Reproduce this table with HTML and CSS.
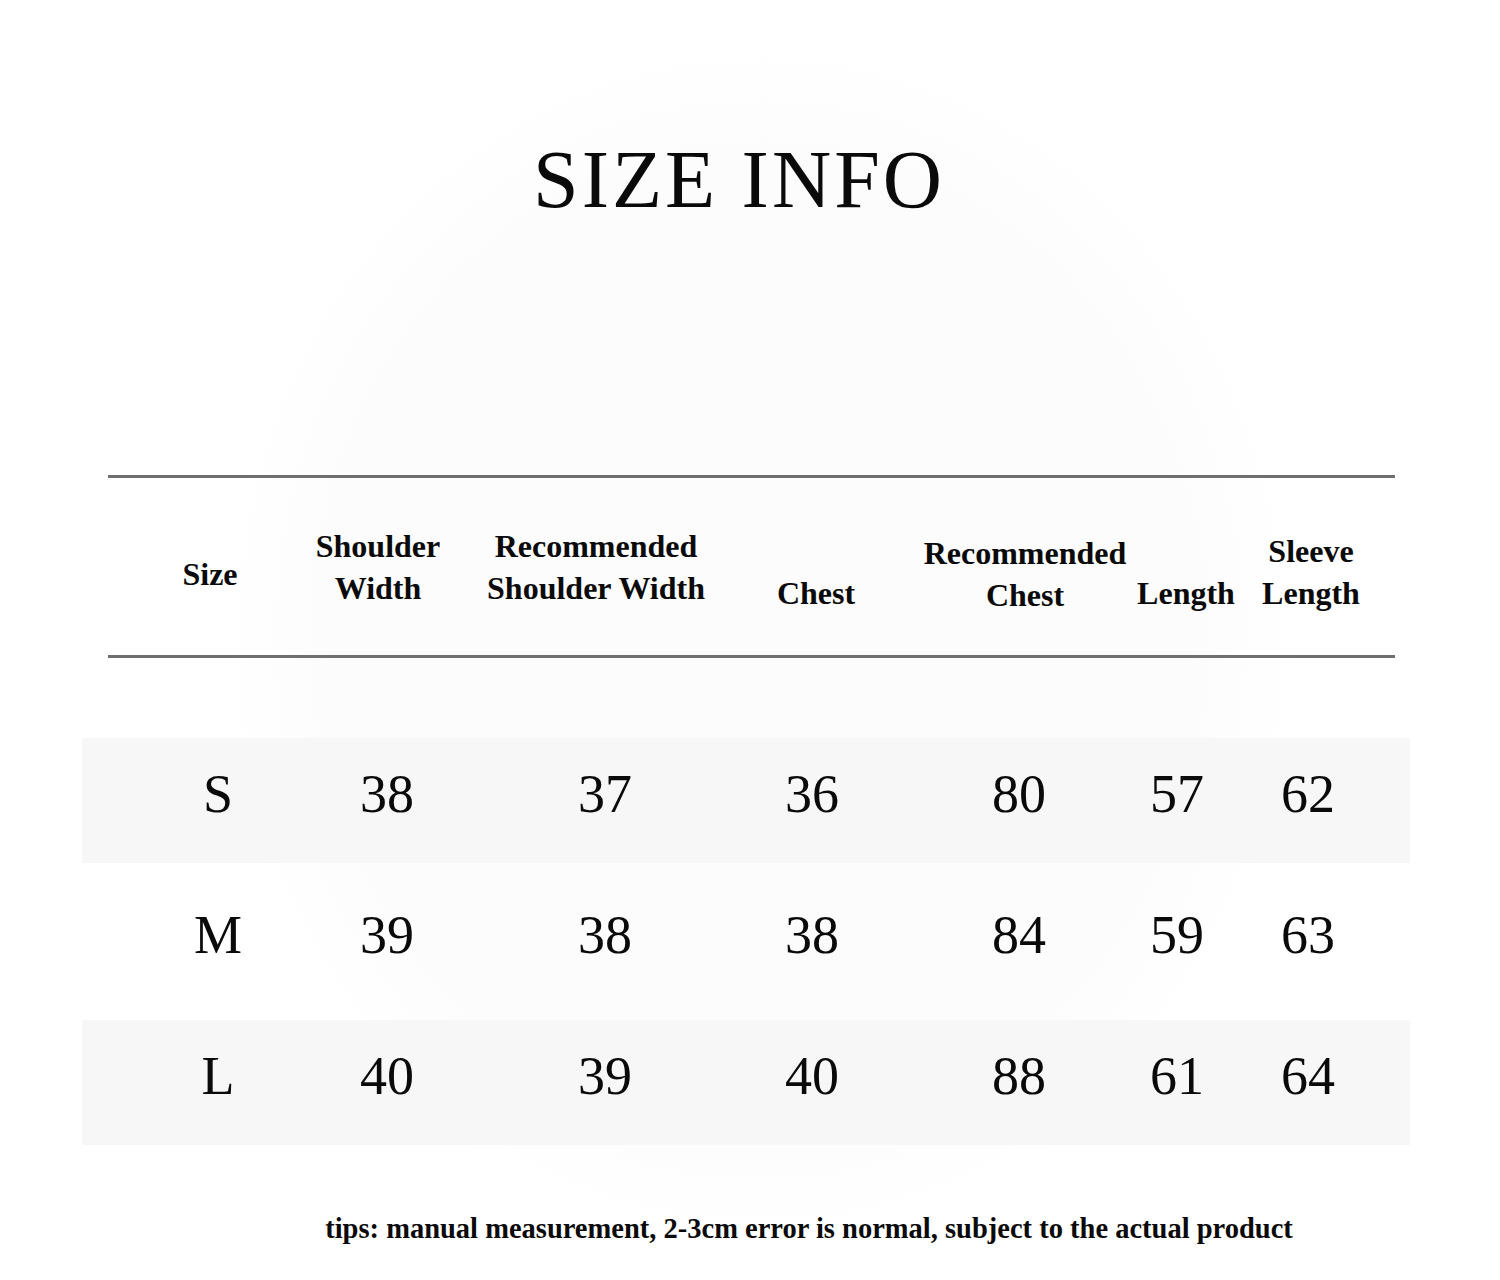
FILE: index.html
```html
<!DOCTYPE html>
<html lang="en">
<head>
<meta charset="utf-8">
<title>Size Info</title>
<link rel="stylesheet" href="styles.css">
</head>
<body>
<main class="page">
  <h1 class="title">SIZE INFO</h1>
  <section class="table">
    <div class="head">
      <div class="hcell h-size"><span>Size</span></div>
      <div class="hcell"><span>Shoulder</span><span>Width</span></div>
      <div class="hcell"><span>Recommended</span><span>Shoulder Width</span></div>
      <div class="hcell h-end"><span>Chest</span></div>
      <div class="hcell h-rchest"><span>Recommended</span><span>Chest</span></div>
      <div class="hcell h-end"><span>Length</span></div>
      <div class="hcell h-sleeve"><span>Sleeve</span><span>Length</span></div>
    </div>
    <div class="rows">
      <div class="row shaded">
        <div class="cell">S</div><div class="cell">38</div><div class="cell">37</div><div class="cell">36</div><div class="cell">80</div><div class="cell">57</div><div class="cell">62</div>
      </div>
      <div class="row">
        <div class="cell">M</div><div class="cell">39</div><div class="cell">38</div><div class="cell">38</div><div class="cell">84</div><div class="cell">59</div><div class="cell">63</div>
      </div>
      <div class="row shaded">
        <div class="cell">L</div><div class="cell">40</div><div class="cell">39</div><div class="cell">40</div><div class="cell">88</div><div class="cell">61</div><div class="cell">64</div>
      </div>
    </div>
  </section>
  <p class="tips">tips: manual measurement, 2-3cm error is normal, subject to the actual product</p>
</main>
</body>
</html>
```

FILE: styles.css
```css
html, body {
  margin: 0;
  padding: 0;
}
body {
  width: 1500px;
  height: 1280px;
  overflow: hidden;
  color: #0a0a0a;
  font-family: "Liberation Serif", "Times New Roman", serif;
  background:
    radial-gradient(ellipse 540px 600px at 760px 640px, #fcfcfc 0%, #fcfcfc 80%, #ffffff 100%);
}
.page {
  padding-top: 139px;
}
.title {
  margin: 0;
  font-size: 82px;
  line-height: 82px;
  font-weight: 400;
  letter-spacing: 3px;
  text-align: center;
  padding-right: 22px;
}
.table {
  margin: 254px 0 0 82px;
  width: 1328px;
}
.head {
  margin: 0 15px 0 26px;
  height: 177px;
  border-top: 3px solid #6f6f6f;
  border-bottom: 3px solid #6f6f6f;
  display: grid;
  grid-template-columns: 124px 212px 224px 216px 202px 120px 130px;
  padding-left: 40px;
  font-size: 32px;
  font-weight: 700;
  line-height: 42px;
}
.hcell {
  display: flex;
  flex-direction: column;
  align-items: center;
  justify-content: center;
  white-space: nowrap;
}
.h-size { padding-top: 14px; }
.h-end { justify-content: flex-end; padding-bottom: 41px; }
.h-rchest { padding-top: 14px; }
.h-sleeve { padding-top: 10px; }
.rows {
  margin-top: 80px;
  display: flex;
  flex-direction: column;
  gap: 16px;
}
.row {
  height: 125px;
  display: grid;
  grid-template-columns: 152px 186px 250px 164px 250px 66px 196px;
  padding-left: 60px;
  font-size: 54px;
}
.row.shaded {
  background: #f7f7f7;
}
.cell {
  display: flex;
  align-items: center;
  justify-content: center;
  padding-bottom: 14px;
  white-space: nowrap;
}
.tips {
  margin: 68px 0 0;
  font-size: 28.5px;
  font-weight: 700;
  line-height: 32px;
  text-align: center;
  padding-left: 118px;
}
```
